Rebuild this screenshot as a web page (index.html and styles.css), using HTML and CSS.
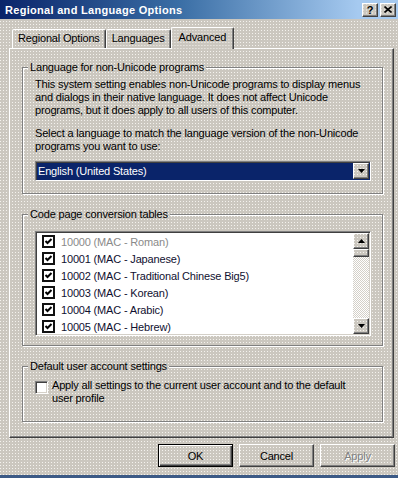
FILE: index.html
```html
<!DOCTYPE html>
<html lang="en">
  <head>
    <meta charset="UTF-8" />
    <title>Regional and Language Options</title>
    <link rel="stylesheet" href="styles.css">
  </head>
  <body>
    <div class="window">
      <div class="titlebar">
        <span class="title">Regional and Language Options</span>
        <div class="caption-buttons">
          <span class="cap-btn help">?</span>
          <span class="cap-btn">
            <svg width="8" height="7" viewBox="0 0 8 7"><path d="M0.5 0.5 L7.5 6.5 M7.5 0.5 L0.5 6.5" stroke="#000" stroke-width="1.6" fill="none"/></svg>
          </span>
        </div>
      </div>
      <div class="dialog">
        <div class="tabs">
          <div class="tab">Regional Options</div>
          <div class="tab">Languages</div>
          <div class="tab active">Advanced</div>
        </div>
        <div class="panel">
          <fieldset class="group group-lang">
            <legend>Language for non-Unicode programs</legend>
            <p>This system setting enables non-Unicode programs to display menus<br>and dialogs in their native language. It does not affect Unicode<br>programs, but it does apply to all users of this computer.</p>
            <p class="gap">Select a language to match the language version of the non-Unicode<br>programs you want to use:</p>
            <div class="combo">
              <span class="combo-value">English (United States)</span>
              <span class="combo-btn">
                <svg width="7" height="4" viewBox="0 0 7 4"><path d="M0 0 H7 L3.5 4 Z" fill="#000"/></svg>
              </span>
            </div>
          </fieldset>

          <fieldset class="group group-codepage">
            <legend>Code page conversion tables</legend>
            <div class="listbox">
              <ul class="rows">
                <li class="row disabled"><span class="check on"><svg width="9" height="9" viewBox="0 0 9 9"><path d="M1.5 4 L3.5 6 L7.5 2" stroke="#000" stroke-width="2" fill="none"/></svg></span>10000 (MAC - Roman)</li>
                <li class="row"><span class="check on"><svg width="9" height="9" viewBox="0 0 9 9"><path d="M1.5 4 L3.5 6 L7.5 2" stroke="#000" stroke-width="2" fill="none"/></svg></span>10001 (MAC - Japanese)</li>
                <li class="row"><span class="check on"><svg width="9" height="9" viewBox="0 0 9 9"><path d="M1.5 4 L3.5 6 L7.5 2" stroke="#000" stroke-width="2" fill="none"/></svg></span>10002 (MAC - Traditional Chinese Big5)</li>
                <li class="row"><span class="check on"><svg width="9" height="9" viewBox="0 0 9 9"><path d="M1.5 4 L3.5 6 L7.5 2" stroke="#000" stroke-width="2" fill="none"/></svg></span>10003 (MAC - Korean)</li>
                <li class="row"><span class="check on"><svg width="9" height="9" viewBox="0 0 9 9"><path d="M1.5 4 L3.5 6 L7.5 2" stroke="#000" stroke-width="2" fill="none"/></svg></span>10004 (MAC - Arabic)</li>
                <li class="row"><span class="check on"><svg width="9" height="9" viewBox="0 0 9 9"><path d="M1.5 4 L3.5 6 L7.5 2" stroke="#000" stroke-width="2" fill="none"/></svg></span>10005 (MAC - Hebrew)</li>
              </ul>
              <div class="scrollbar">
                <span class="scroll-btn"><svg width="7" height="4" viewBox="0 0 7 4"><path d="M0 4 H7 L3.5 0 Z" fill="#000"/></svg></span>
                <span class="scroll-thumb"></span>
                <span class="scroll-track"></span>
                <span class="scroll-btn"><svg width="7" height="4" viewBox="0 0 7 4"><path d="M0 0 H7 L3.5 4 Z" fill="#000"/></svg></span>
              </div>
            </div>
          </fieldset>

          <fieldset class="group group-default">
            <legend>Default user account settings</legend>
            <div class="option">
              <span class="check sunken"></span>
              <span>Apply all settings to the current user account and to the default<br>user profile</span>
            </div>
          </fieldset>
        </div>
        <div class="actions">
          <button class="btn default">OK</button>
          <button class="btn">Cancel</button>
          <button class="btn disabled">Apply</button>
        </div>
      </div>
      <div class="bottom-edge"></div>
    </div>
  </body>
</html>
```
FILE: styles.css
```css
body {
  margin: 0;
  font-family: "Liberation Sans", Arial, sans-serif;
  font-size: 11px;
  letter-spacing: -0.17px;
  color: #000;
  background: #d4d0c8;
}

.window {
  width: 398px;
  height: 478px;
  display: flex;
  flex-direction: column;
  overflow: hidden;
}

/* dithered classic face colour */
.dialog,
.group legend,
.tab,
.btn,
.cap-btn,
.combo-btn,
.scroll-btn,
.scroll-thumb {
  background-color: #cbc7bf;
  background-image: conic-gradient(at 1px 1px, transparent 270deg, #f4f2ee 0);
  background-size: 3px 3px;
  background-attachment: fixed;
}

.titlebar {
  height: 19px;
  flex-shrink: 0;
  display: flex;
  align-items: center;
  justify-content: space-between;
  padding: 0 2px 0 5px;
  background: linear-gradient(to right, #0a246a, #3a6ea5 45%, #a6caf0 90%);
}

.title {
  color: #fff;
  font-weight: bold;
  font-size: 11px;
  letter-spacing: 0.3px;
}

.caption-buttons {
  display: flex;
  gap: 2px;
}

.cap-btn {
  width: 16px;
  height: 14px;
  box-sizing: border-box;
  border: 1px solid;
  border-color: #fff #404040 #404040 #fff;
  box-shadow: inset -1px -1px #808080;
  display: flex;
  align-items: center;
  justify-content: center;
}

.cap-btn.help {
  font-weight: bold;
  font-size: 11px;
  line-height: 12px;
}

.dialog {
  flex: 1;
  padding: 8px 3px 0 9px;
}

.tabs {
  display: flex;
  align-items: flex-end;
  height: 21px;
  padding-left: 3px;
}

.tab {
  height: 19px;
  box-sizing: border-box;
  padding: 0 5px;
  border: 1px solid;
  border-bottom: none;
  border-color: #fff #404040 transparent #fff;
  box-shadow: inset -1px 0 #808080;
  border-radius: 2px 2px 0 0;
  line-height: 17px;
  white-space: nowrap;
}

.tab.active {
  height: 22px;
  margin: 0 -1px -1px 0;
  padding: 0 7px;
  position: relative;
  z-index: 1;
  line-height: 19px;
}

.panel {
  height: 390px;
  box-sizing: border-box;
  margin-right: 1px;
  padding: 12px 10px 0 12px;
  border: 1px solid;
  border-color: #fff #404040 #404040 #fff;
  box-shadow: inset -1px -1px #808080;
}

.group {
  margin: 0 0 14px;
  padding: 4px 11px 12px 12px;
  border: 1px solid #808080;
  box-shadow: inset 1px 1px #fff, 1px 1px #fff;
}

.group legend {
  padding: 0 2px;
  margin-left: -7px;
  line-height: 13px;
}

.group p {
  margin: 0;
  line-height: 13px;
  white-space: nowrap;
}

.group p.gap {
  margin-top: 10px;
}

.combo {
  margin-top: 8px;
  height: 20px;
  box-sizing: border-box;
  display: flex;
  border: 1px solid;
  border-color: #808080 #fff #fff #808080;
  box-shadow: inset 1px 1px #404040;
  padding: 1px;
  background: #0a246a;
}

.combo-value {
  flex: 1;
  color: #fff;
  padding-left: 1px;
  line-height: 16px;
}

.combo-btn {
  width: 16px;
  box-sizing: border-box;
  border: 1px solid;
  border-color: #fff #404040 #404040 #fff;
  box-shadow: inset -1px -1px #808080;
  display: flex;
  align-items: center;
  justify-content: center;
}

.group-codepage {
  padding-top: 10px;
  padding-bottom: 9px;
}

.listbox {
  height: 105px;
  box-sizing: border-box;
  display: flex;
  padding: 1px;
  border: 1px solid;
  border-color: #808080 #fff #fff #808080;
  box-shadow: inset 1px 1px #404040, inset -1px -1px #d4d0c8;
  background: #fff;
}

.rows {
  flex: 1;
  margin: 0;
  padding: 0 0 0 5px;
  list-style: none;
  overflow: hidden;
}

.row {
  height: 17px;
  display: flex;
  align-items: center;
  gap: 6px;
  color: #101030;
  white-space: nowrap;
}

.row.disabled {
  color: #8a8a8a;
}

.check {
  width: 13px;
  height: 13px;
  box-sizing: border-box;
  flex-shrink: 0;
  background: #fff;
}

.check.on {
  border: 2px solid #111;
  display: flex;
  align-items: center;
  justify-content: center;
}

.check.sunken {
  border: 1px solid;
  border-color: #808080 #fff #fff #808080;
  box-shadow: inset 1px 1px #404040, inset -1px -1px #d4d0c8;
  margin-top: 2px;
}

.scrollbar {
  width: 16px;
  display: flex;
  flex-direction: column;
  background-image: conic-gradient(#fff 25%, #d4d0c8 0 50%, #fff 0 75%, #d4d0c8 0);
  background-size: 2px 2px;
}

.scroll-btn,
.scroll-thumb {
  height: 16px;
  box-sizing: border-box;
  border: 1px solid;
  border-color: #fff #404040 #404040 #fff;
  box-shadow: inset -1px -1px #808080;
  display: flex;
  align-items: center;
  justify-content: center;
}

.scroll-thumb {
  height: 8px;
}

.scroll-track {
  flex: 1;
}

.group-default {
  padding-top: 6px;
  padding-bottom: 16px;
  margin-bottom: 0;
}

.option {
  display: flex;
  align-items: flex-start;
  gap: 4px;
  line-height: 13px;
  white-space: nowrap;
}

.actions {
  display: flex;
  justify-content: flex-end;
  gap: 6px;
  margin-top: 6px;
}

.btn {
  width: 75px;
  height: 23px;
  box-sizing: border-box;
  padding: 0;
  font: inherit;
  letter-spacing: inherit;
  color: #000;
  border: 1px solid;
  border-color: #fff #404040 #404040 #fff;
  box-shadow: inset -1px -1px #808080;
}

.btn.default {
  border-color: #000;
  box-shadow: inset 1px 1px #fff, inset -1px -1px #404040, inset -2px -2px #808080;
}

.btn.disabled {
  color: #808080;
  text-shadow: 1px 1px #fff;
}

.bottom-edge {
  height: 3px;
  flex-shrink: 0;
  background: #3c5a86;
}
```
